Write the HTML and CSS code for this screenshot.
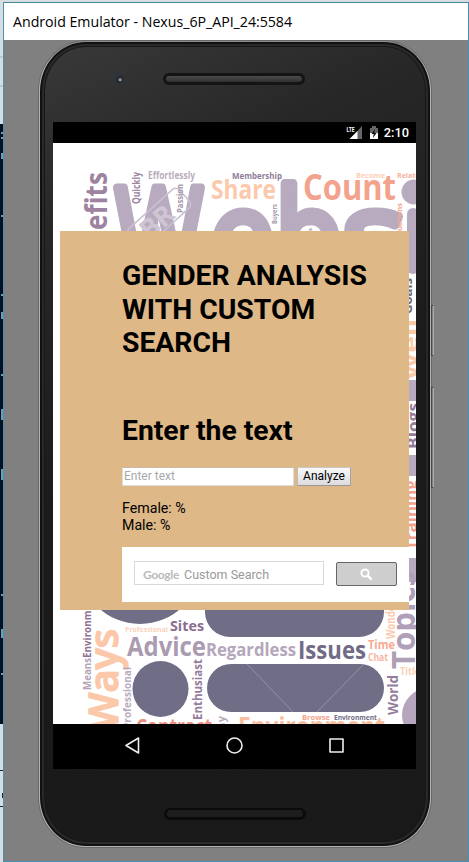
FILE: index.html
```html
<!DOCTYPE html>
<html lang="en">
<head>
<meta charset="utf-8">
<title>Android Emulator - Nexus_6P_API_24:5584</title>
<link rel="stylesheet" href="styles.css">
</head>
<body>
<div class="desktop">
  <svg class="backdrop" width="3" height="862" viewBox="0 0 3 862" aria-hidden="true">
    <rect width="4" height="862" fill="#d5dde0"/>
    <path d="M0 57h4M0 86h4" stroke="#a9b0b3"/>
    <rect y="124" width="4" height="600" fill="#06111f"/>
    <path d="M1 133h2M1 138h2M2 153v6M1 216h2M1 295h2M2 312v7M1 375h2M2 409v11M2 469v11M1 595h2M2 629v9M1 674h2" stroke="#719bb5" stroke-width="2"/>
    <path d="M0 770.500h3M0 806.500h3M2.500 793v5" stroke="#222"/>
  </svg>
  <div class="window">
    <div class="titlebar"><span>Android Emulator - Nexus_6P_API_24:5584</span></div>
    <div class="stage">
      <div class="phone">
        <div class="top-bezel"><i class="camera"></i><i class="speaker"></i></div>
        <div class="screen">
          <div class="status">
            <svg width="34" height="16" viewBox="346 125 34 16">
              <text x="346.500" y="131.500" class="lte" textLength="8" lengthAdjust="spacingAndGlyphs">LTE</text>
              <path d="M362 126v13h-12z" fill="#666"/>
              <path d="M357.500 131v8h-8z" fill="#fff"/>
              <path d="M370 128h2v-2h4v2h2v6h-8z" fill="#666"/>
              <path d="M370 133h8v6h-8z" fill="#fff"/>
              <path d="M375 129l-3.500 5h2.200l-.7 4 3.500-5h-2.200z" fill="#111"/>
            </svg>
            <span class="clock">2:10</span>
          </div>
          <div class="page">
            <svg class="cloud" width="363" height="581" viewBox="53 143 363 581">
              <rect x="53" y="143" width="363" height="581" fill="#fff"/>
              <g class="giant">
                <text x="115" y="281" textLength="88" lengthAdjust="spacingAndGlyphs">W</text>
                <text x="209" y="283" textLength="66" lengthAdjust="spacingAndGlyphs">e</text>
                <text x="275" y="283" textLength="68" lengthAdjust="spacingAndGlyphs">b</text>
                <text x="342" y="283" textLength="64" lengthAdjust="spacingAndGlyphs">s</text>
              </g>
              <circle cx="414" cy="192" r="12.500" fill="#b8abc0"/>
              <rect x="407" y="208" width="12" height="66" rx="6" fill="#b8abc0"/>
              <g transform="translate(158 220) rotate(-42)" class="mark">
                <rect x="-32" y="-13" width="68" height="25" rx="5"/>
                <text x="-20" y="10">BR</text>
              </g>
              <text transform="translate(107 230) rotate(-90)" textLength="58" lengthAdjust="spacingAndGlyphs" font-size="30" fill="#9d839f">efits</text>
              <text transform="translate(139.500 204) rotate(-90)" textLength="32" lengthAdjust="spacingAndGlyphs" font-size="10" fill="#9d839f">Quickly</text>
              <text transform="translate(183 213) rotate(-90)" textLength="29" lengthAdjust="spacingAndGlyphs" font-size="8" fill="#a595a8">Passion</text>
              <text x="148" y="179" textLength="47" lengthAdjust="spacingAndGlyphs" font-size="10" fill="#b9adbd">Effortlessly</text>
              <text x="232" y="179" textLength="50" lengthAdjust="spacingAndGlyphs" font-size="9.500" fill="#8f7d98">Membership</text>
              <text x="211" y="199" textLength="65" lengthAdjust="spacingAndGlyphs" font-size="27" fill="#fbc9ab">Share</text>
              <text x="303" y="200" textLength="93" lengthAdjust="spacingAndGlyphs" font-size="35" fill="#f3a28d">Count</text>
              <text x="356" y="178" textLength="29" lengthAdjust="spacingAndGlyphs" font-size="7.500" fill="#fbd0b6">Become</text>
              <text x="397" y="178" textLength="27" lengthAdjust="spacingAndGlyphs" font-size="7.500" fill="#f6b29c">Related</text>
              <text transform="translate(277 224) rotate(-90)" textLength="20" lengthAdjust="spacingAndGlyphs" font-size="6.500" fill="#a99bad">Buyers</text>
              <text transform="translate(402 231) rotate(-90)" textLength="28" lengthAdjust="spacingAndGlyphs" font-size="7.500" fill="#f3a895">uctions</text>
              <text transform="translate(312 231) rotate(-90)" font-size="6" fill="#a99bad">s</text>
              <g fill="#b8abc0">
                <rect x="405" y="380" width="12" height="21"/>
                <rect x="405" y="455" width="12" height="21"/>
                <rect x="405" y="558" width="12" height="24" rx="2"/>
              </g>
              <text transform="translate(412 314) rotate(-90)" textLength="36" lengthAdjust="spacingAndGlyphs" font-size="13" fill="#6f6a75">Goals</text>
              <text transform="translate(418 380) rotate(-90)" textLength="61" lengthAdjust="spacingAndGlyphs" font-size="22" fill="#fbcba9">Well</text>
              <text transform="translate(419 449) rotate(-90)" textLength="46" lengthAdjust="spacingAndGlyphs" font-size="16" fill="#947c99">Blogs</text>
              <text transform="translate(417 550) rotate(-90)" textLength="70" lengthAdjust="spacingAndGlyphs" font-size="17" fill="#f3a18e">Training</text>
              <g fill="#706d87">
                <circle cx="140" cy="563" r="61"/>
                <circle cx="160.500" cy="689" r="28"/>
                <rect x="205" y="585" width="179" height="52" rx="25"/>
                <rect x="207" y="664" width="177" height="48" rx="24"/>
              </g>
              <path d="M247 664l46 48M364 664l-47 48" stroke="#9691a8"/>
              <circle cx="429" cy="715" r="27" fill="#b5a6bd"/>
              <text x="170" y="631" textLength="34" lengthAdjust="spacingAndGlyphs" font-size="15" fill="#8b6c91">Sites</text>
              <text x="125" y="632" textLength="43" lengthAdjust="spacingAndGlyphs" font-size="7.500" fill="#fbd3bb">Professional</text>
              <text x="127" y="656" textLength="79" lengthAdjust="spacingAndGlyphs" font-size="27" fill="#aa9bb1">Advice</text>
              <text x="206" y="656" textLength="90" lengthAdjust="spacingAndGlyphs" font-size="18" fill="#b5a7bb">Regardless</text>
              <text x="298" y="659" textLength="68" lengthAdjust="spacingAndGlyphs" font-size="25" fill="#706b87">Issues</text>
              <text x="368" y="649" textLength="27" lengthAdjust="spacingAndGlyphs" font-size="13" fill="#f6a992">Time</text>
              <text x="368" y="661" textLength="20" lengthAdjust="spacingAndGlyphs" font-size="10" fill="#f8b6a0">Chat</text>
              <text class="ways" transform="translate(118 730) rotate(-90)" textLength="101" lengthAdjust="spacingAndGlyphs" font-size="40">Ways</text>
              <text transform="translate(91 690) rotate(-90)" textLength="32" lengthAdjust="spacingAndGlyphs" font-size="10.500" fill="#b4a5b8">Means</text>
              <text transform="translate(91 658) rotate(-90)" textLength="64" lengthAdjust="spacingAndGlyphs" font-size="10.500" fill="#8f7196">Environment</text>
              <text transform="translate(131 729) rotate(-90)" textLength="62" lengthAdjust="spacingAndGlyphs" font-size="10.500" fill="#b9abbd">Professional</text>
              <text transform="translate(202 720) rotate(-90)" textLength="61" lengthAdjust="spacingAndGlyphs" font-size="13" fill="#967b9c">Enthusiast</text>
              <text x="136" y="734" textLength="76" lengthAdjust="spacingAndGlyphs" font-size="21" fill="#ef8d7e">Contract</text>
              <text transform="translate(225 730) rotate(-90)" textLength="14" font-size="11" fill="#b9abbd">ny</text>
              <text x="238" y="736" textLength="147" lengthAdjust="spacingAndGlyphs" font-size="27" fill="#f9bfa0">Environment</text>
              <text x="302" y="719.500" textLength="28" lengthAdjust="spacingAndGlyphs" font-size="7.500" fill="#f5a28b">Browse</text>
              <text x="334" y="719.500" textLength="43" lengthAdjust="spacingAndGlyphs" font-size="7.500" fill="#716c87">Environment</text>
              <text transform="translate(398 715) rotate(-90)" textLength="40" lengthAdjust="spacingAndGlyphs" font-size="15" fill="#957e9b">World</text>
              <text transform="translate(395 639) rotate(-90)" textLength="38" lengthAdjust="spacingAndGlyphs" font-size="12" fill="#fbcbb0">Wonder</text>
              <text transform="translate(415 669) rotate(-90)" textLength="98" lengthAdjust="spacingAndGlyphs" font-size="33" fill="#b0a0b7">Topics</text>
              <text x="400" y="675" textLength="20" lengthAdjust="spacingAndGlyphs" font-size="10" fill="#fbd0b3">Title</text>
            </svg>
            <main class="panel">
              <h1 class="title">GENDER ANALYSIS WITH CUSTOM SEARCH</h1>
              <h1 class="prompt">Enter the text</h1>
              <div class="form"><input class="text" type="text" placeholder="Enter text"><button class="analyze">Analyze</button></div>
              <p class="result">Female: %<br>Male: %</p>
              <div class="search">
                <div class="query"><b>Google</b><span>Custom Search</span></div>
                <button class="go" aria-label="Search"><svg width="13" height="13" viewBox="0 0 13 13"><circle cx="5" cy="5" r="3.600" fill="none" stroke="#fff" stroke-width="2"/><path d="M7.600 7.600l4 4" stroke="#fff" stroke-width="2.400"/></svg></button>
              </div>
            </main>
          </div>
          <div class="nav">
            <svg width="363" height="45" viewBox="53 724 363 45" fill="none" stroke="#eee" stroke-width="1.600" stroke-linejoin="round">
              <path d="M126 745.500l12.500-7.500v15z"/><circle cx="234.500" cy="745.500" r="7.500"/><rect x="330" y="739" width="13" height="13"/>
            </svg>
          </div>
        </div>
        <div class="bottom-bezel"><i class="speaker low"></i></div>
      </div>
      <div class="keys"><i class="power"></i><i class="volume"></i></div>
    </div>
  </div>
</div>
</body>
</html>
```
FILE: styles.css
```css
* { box-sizing: border-box; }
body { margin: 0; overflow: hidden; font-family: Roboto, "Liberation Sans", sans-serif; color: #000; }
.desktop { display: flex; width: 469px; height: 862px; padding-top: 2px; background: #d5dde0; }
.backdrop { flex: none; width: 3px; margin-top: -2px; }
.window { width: 466px; height: 860px; border: 1px solid #4a8fb5; border-top-color: #4a8799; background: #808080; }
.titlebar { height: 37px; padding: 0 9px; display: flex; align-items: center; background: #fff; font-family: "Open Sans", sans-serif; font-size: 14.2px; white-space: nowrap; }
.titlebar span { letter-spacing: -0.02px; }
.stage { display: flex; padding: 1px 0 0 35px; }
.phone { width: 392px; height: 806px; padding: 0 13px; border: 1px solid #b4b4b4; border-top-color: #8d8d8d; border-radius: 47px / 50px; background: linear-gradient(155deg, #393939 0, #272727 20%, #1b1b1b 48%, #191919 100%); box-shadow: inset 0 0 0 2px #111, inset 0 0 0 4px #292929, inset 0 0 0 5px #171717, 0 0 0 1px #686868; }
.top-bezel { height: 80px; padding: 31px 0 0 59px; display: flex; }
.camera { width: 12px; height: 12px; margin-top: -1px; border-radius: 50%; background: radial-gradient(circle at 68% 65%, #999 0 1px, #252b32 2px 4px, #30343a 5px); }
.speaker { width: 142px; height: 12px; margin-left: 39px; border: 3px solid #141414; border-radius: 6px; background: linear-gradient(#4b4b4b, #303030); }
.speaker.low { background: #1d1d1d; border-color: #0b0b0b; margin-left: 0; border-top-width: 2px; }
.bottom-bezel { padding: 39px 0 0 111px; display: flex; }
.screen { width: 363px; height: 647px; background: #000; }
.status { height: 21px; display: flex; align-items: flex-start; justify-content: flex-end; gap: 4px; padding: 3px 7px 0 0; }
.lte { font: 700 6.5px Roboto, sans-serif; fill: #fff; }
.clock { color: #fff; font-size: 12.8px; font-weight: 500; line-height: 16px; }
.page { display: grid; height: 581px; overflow: hidden; }
.cloud { grid-area: 1 / 1; font-family: "Open Sans", sans-serif; font-weight: 700; }
.giant { font-size: 130px; font-weight: 400; fill: #b8abc0; stroke: #b8abc0; stroke-width: 9px; stroke-linejoin: round; }
.ways { font-weight: 600; fill: #fbc8aa; stroke: #fbc8aa; stroke-width: 1.5px; stroke-linejoin: round; }
.mark { fill: none; stroke: #cbbfd0; stroke-width: 1.5px; }
.mark text { font-size: 27px; fill: #cfc5d3; stroke: none; }
.panel { grid-area: 1 / 1; z-index: 1; width: 349px; height: 379px; margin: 88px 0 0 7px; padding: 28px 0 0 62px; background: #deb887; }
h1 { margin: 0; font-size: 28.3px; line-height: 33.5px; font-weight: 700; }
.title { width: 265px; }
.prompt { margin-top: 54.5px; }
.form { display: flex; gap: 4px; margin-top: 19px; }
.text { width: 172px; height: 19px; margin: 0; padding: 0 1px; border: 1px solid #ddd; border-top-color: #c8b9a4; background: #fff; font: 12px Roboto, sans-serif; }
.text::placeholder { color: #a9a9a9; }
.analyze { width: 54px; height: 19px; margin-left: -1px; padding: 0; border: 1px solid #aaa; border-color: #c8c8c8 #a5a5a5 #999 #bbb; border-radius: 1px; background: linear-gradient(#f8f8f8, #dcdce0); color: #000; font: 12px Roboto, sans-serif; }
.result { margin: 14.5px 0 0; font-size: 14.2px; line-height: 17px; }
.search { display: flex; gap: 12px; height: 55px; margin-top: 13px; padding: 14px 12px; background: #fff; }
.query { display: flex; align-items: center; width: 190px; height: 24px; padding: 2px 8px 0; gap: 4px; border: 1px solid #d9d9d9; color: #999; font-size: 12.5px; white-space: nowrap; }
.query b { width: 37px; color: #bbb; font: 700 12px Lato, sans-serif; letter-spacing: -0.35px; }
.go { display: flex; align-items: center; justify-content: center; width: 61px; height: 24px; margin-top: 1px; padding: 0; border: 1px solid #666; border-radius: 2px; background: #cecece; }
.nav svg { display: block; }
.keys { display: flex; flex-direction: column; gap: 31px; padding-top: 264px; }
.keys i { width: 3px; border: 1px solid #484848; border-right-color: #aaa; border-left-width: 1px; }
.power { height: 51px; }
.volume { height: 101px; }
```
